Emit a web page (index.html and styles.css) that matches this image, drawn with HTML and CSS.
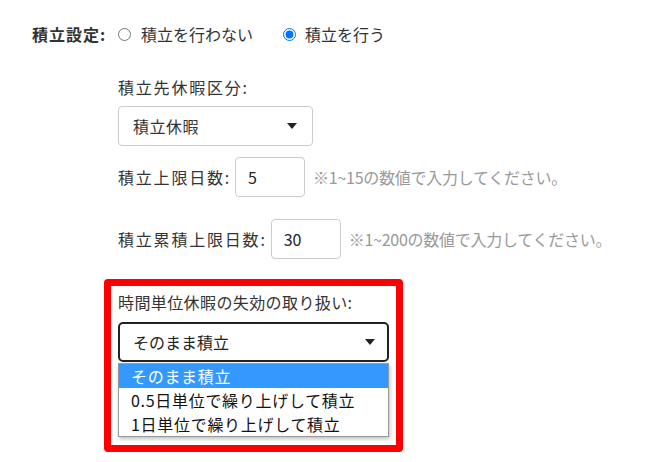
FILE: index.html
```html
<!DOCTYPE html>
<html lang="ja">
<head>
<meta charset="utf-8">
<title>積立設定</title>
<link rel="stylesheet" href="styles.css">
</head>
<body>
<div class="page">
  <div class="row-main">
    <span class="main-label">積立設定:</span>
    <label class="radio"><input type="radio" name="acc" class="radio-input"><span>積立を行わない</span></label>
    <label class="radio radio-second"><input type="radio" name="acc" class="radio-input" checked><span>積立を行う</span></label>
  </div>
  <div class="sub">
    <div class="field-label sub-label">積立先休暇区分:</div>
    <div class="select select-kind">
      <span>積立休暇</span>
      <span class="arrow"></span>
    </div>
    <div class="num-row num-row-first">
      <span class="sub-label">積立上限日数:</span>
      <div class="num-input">5</div>
      <span class="hint">※1~15の数値で入力してください。</span>
    </div>
    <div class="num-row num-row-second">
      <span class="sub-label">積立累積上限日数:</span>
      <div class="num-input">30</div>
      <span class="hint">※1~200の数値で入力してください。</span>
    </div>
  </div>
  <div class="highlight">
    <div class="field-label box-label">時間単位休暇の失効の取り扱い:</div>
    <div class="select select-focus">
      <span>そのまま積立</span>
      <span class="arrow"></span>
    </div>
    <ul class="listbox">
      <li class="option option-selected">そのまま積立</li>
      <li class="option">0.5日単位で繰り上げして積立</li>
      <li class="option">1日単位で繰り上げして積立</li>
    </ul>
  </div>
</div>
</body>
</html>
```

FILE: styles.css
```css
* { box-sizing: border-box; }
body {
  margin: 0;
  background: #fff;
  font-family: "Noto Sans CJK JP", "Noto Sans", sans-serif;
  font-size: 16px;
  color: #333;
}
.page {
  padding: 22px 0 0 32px;
  display: flex;
  flex-direction: column;
  align-items: flex-start;
}
.row-main {
  display: flex;
  align-items: center;
  height: 24px;
  line-height: 24px;
}
.main-label {
  font-weight: bold;
  width: 86px;
  letter-spacing: 1px;
}
.radio {
  display: flex;
  align-items: center;
}
.radio-second { margin-left: 30px; }
.radio-input {
  margin: 0 10px 0 0;
  width: 13px;
  height: 13px;
  accent-color: #0075ff;
}
.radio-second .radio-input { margin-right: 9px; }
.sub {
  margin-left: 86px;
  margin-top: 29px;
  display: flex;
  flex-direction: column;
  align-items: flex-start;
}
.field-label {
  line-height: 24px;
  height: 24px;
}
.sub-label {
  letter-spacing: 1.8px;
}
.box-label {
  letter-spacing: 0.4px;
}
.select {
  margin-top: 7px;
  height: 40px;
  display: flex;
  align-items: center;
  justify-content: space-between;
  background: #fff;
}
.select-kind {
  width: 195px;
  border: 1px solid #ccc;
  border-radius: 4px;
  padding: 0 15px 0 14px;
  letter-spacing: 0.5px;
}
.arrow {
  width: 0;
  height: 0;
  border-left: 5px solid transparent;
  border-right: 5px solid transparent;
  border-top: 6px solid #222;
}
.num-row {
  display: flex;
  align-items: center;
}
.num-row-first { margin-top: 11px; }
.num-row-second { margin-top: 22px; }
.num-input {
  margin-left: 4px;
  width: 70px;
  height: 40px;
  border: 1px solid #ccc;
  border-radius: 4px;
  padding-left: 12px;
  display: flex;
  align-items: center;
  color: #222;
}
.hint {
  margin-left: 8px;
  color: #999;
  letter-spacing: -0.25px;
}
.highlight {
  margin-top: 20px;
  margin-left: 72px;
  border: 7px solid #ff0000;
  border-radius: 4px;
  padding: 4px 7px 8px 7px;
  display: flex;
  flex-direction: column;
  width: 299px;
}
.highlight .select { margin-top: 8px; }
.select-focus {
  width: 271px;
  border: 2px solid #222;
  border-radius: 5px;
  padding: 0 12px 0 13px;
  color: #222;
}
.listbox {
  list-style: none;
  margin: 1px 0 0 0;
  padding: 0;
  width: 271px;
  border: 1px solid #999;
  box-shadow: 1px 2px 4px rgba(0,0,0,0.25);
  background: #fff;
  color: #111;
}
.option {
  height: 24px;
  line-height: 24px;
  padding-left: 12px;
  letter-spacing: 0.7px;
}
.option-selected {
  background: #3399ff;
  color: #fff;
}
```
